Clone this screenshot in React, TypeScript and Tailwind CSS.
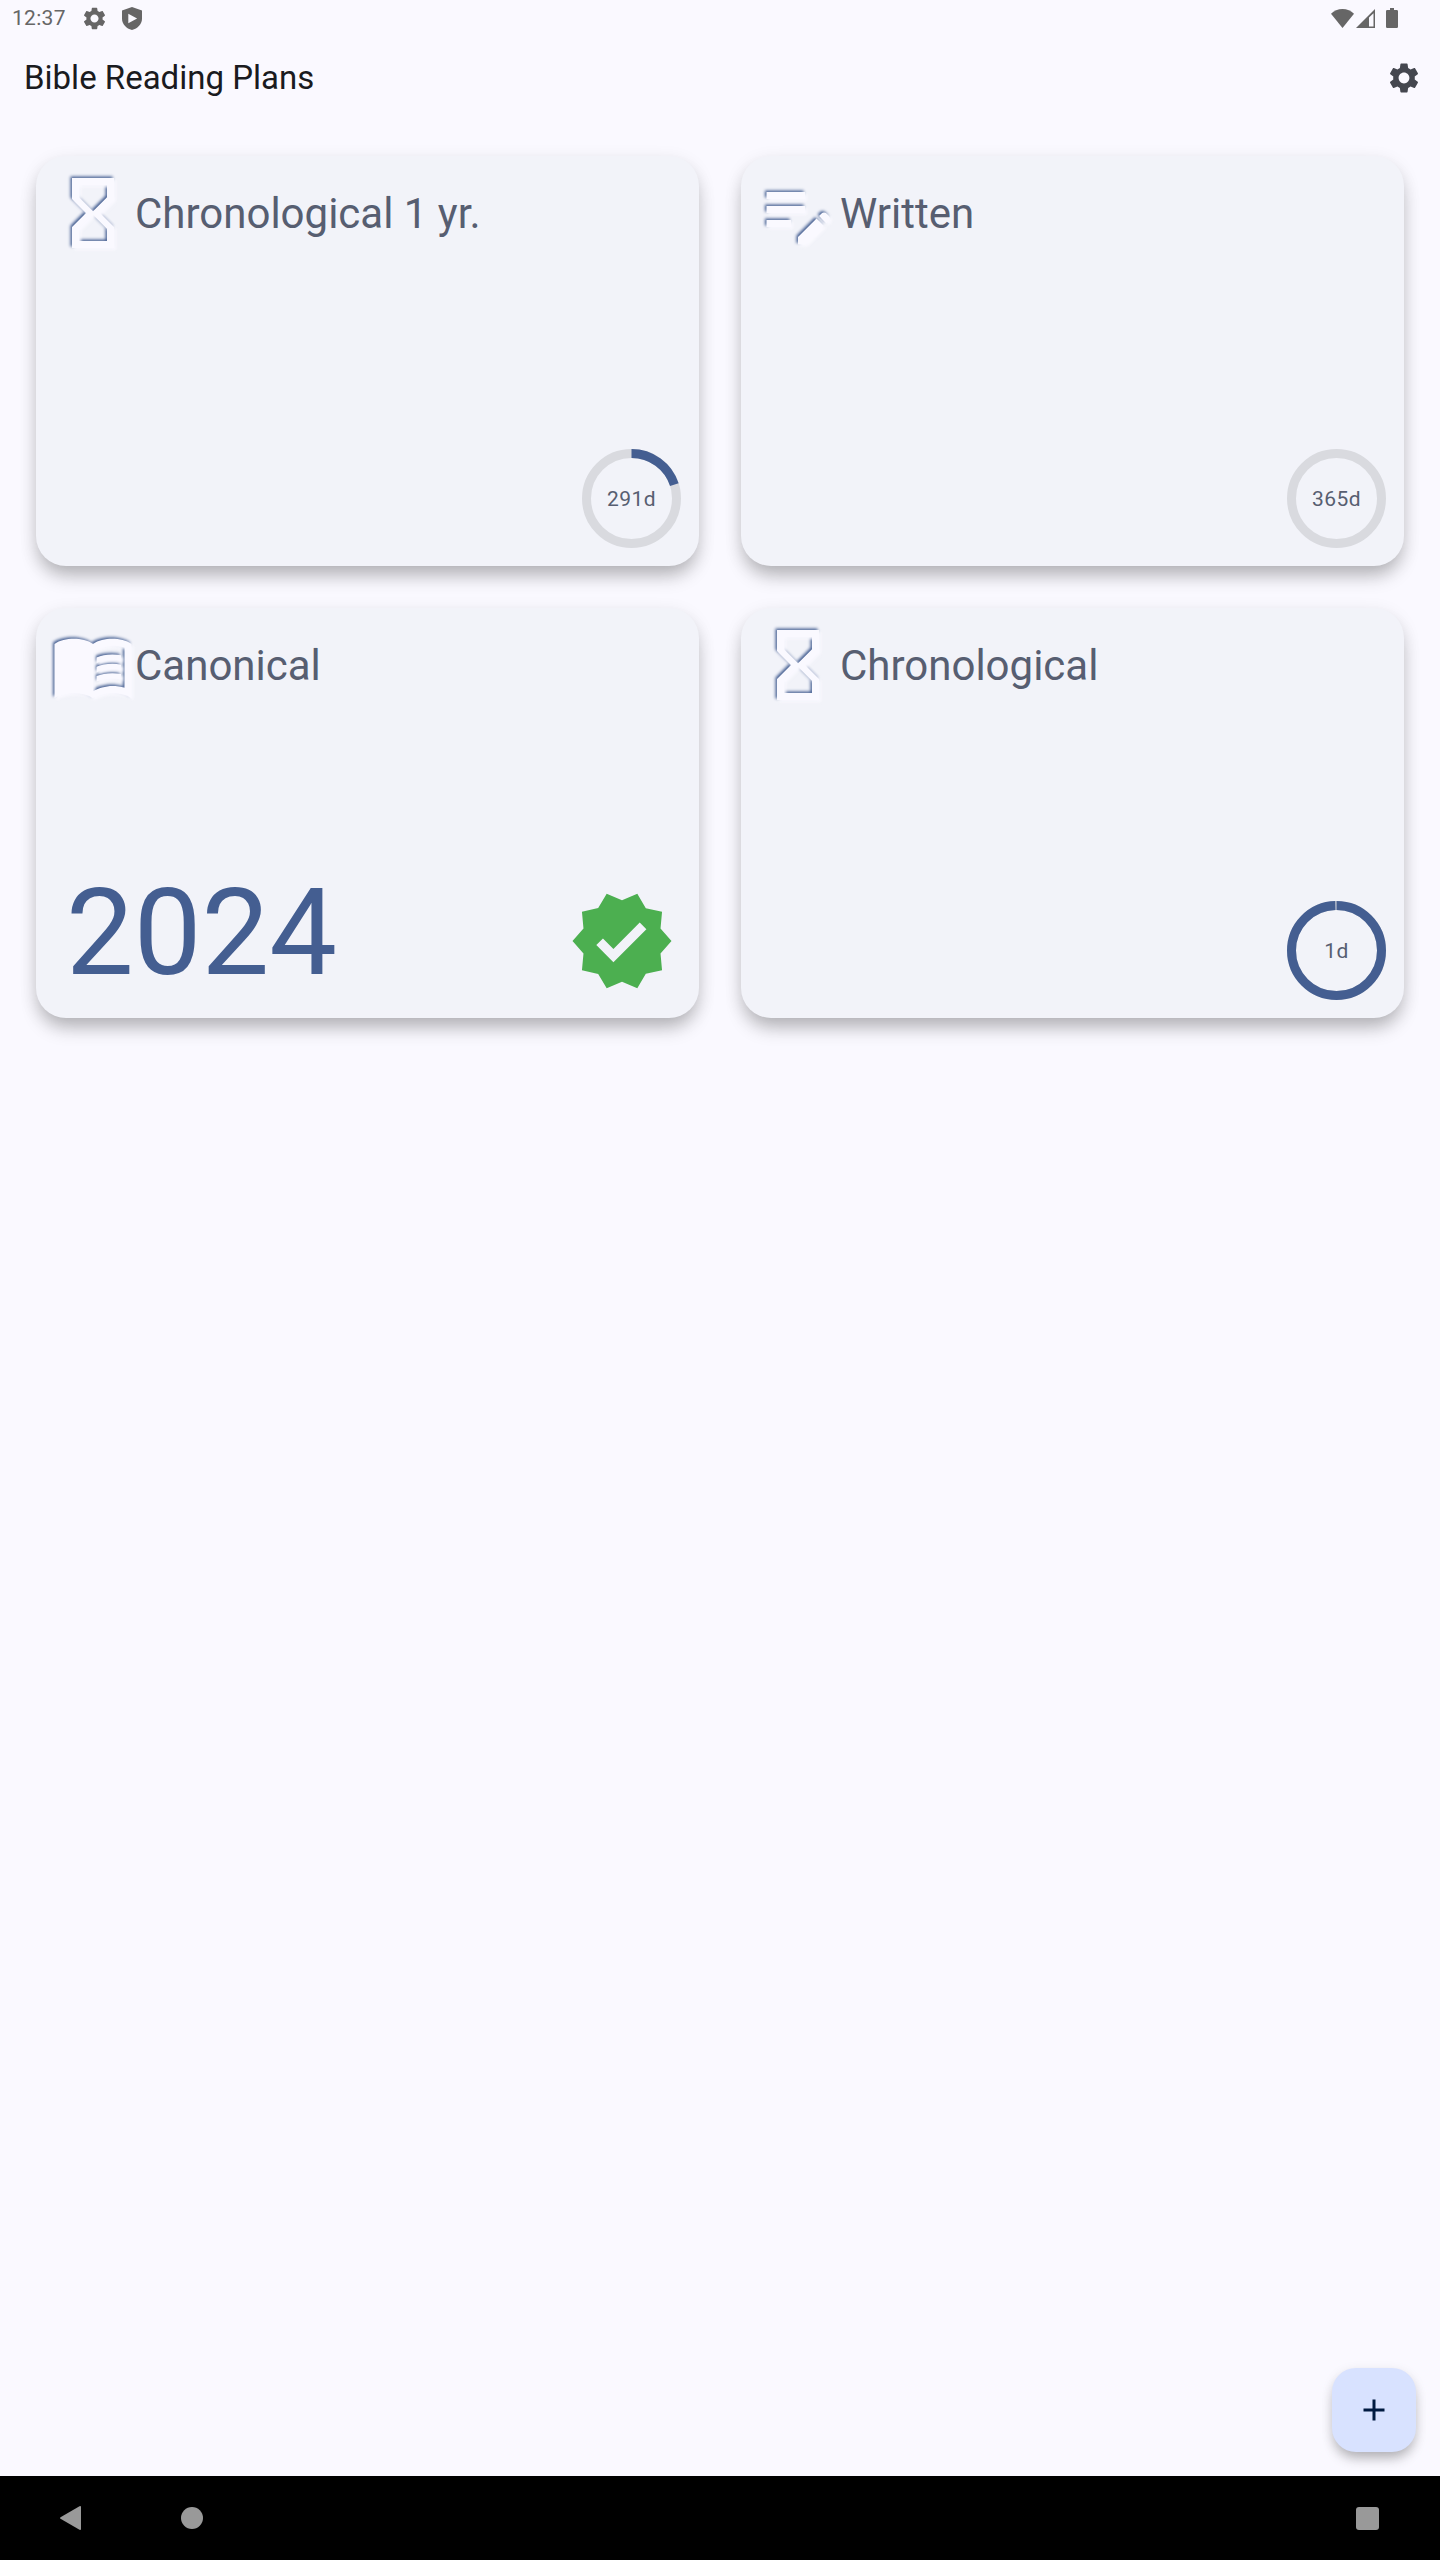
import type { ReactNode } from "react";

const GEAR =
  "M19.14 12.94c.04-.3.06-.61.06-.94 0-.32-.02-.64-.07-.94l2.03-1.58c.18-.14.23-.41.12-.61l-1.92-3.32c-.12-.22-.37-.29-.59-.22l-2.39.96c-.5-.38-1.03-.7-1.62-.94l-.36-2.54c-.04-.24-.24-.41-.48-.41h-3.84c-.24 0-.43.17-.47.41l-.36 2.54c-.59.24-1.13.57-1.62.94l-2.39-.96c-.22-.08-.47 0-.59.22L2.74 8.87c-.12.21-.08.47.12.61l2.03 1.58c-.05.3-.09.63-.09.94s.02.64.07.94l-2.03 1.58c-.18.14-.23.41-.12.61l1.92 3.32c.12.22.37.29.59.22l2.39-.96c.5.38 1.03.7 1.62.94l.36 2.54c.05.24.24.41.48.41h3.84c.24 0 .44-.17.47-.41l.36-2.54c.59-.24 1.13-.56 1.62-.94l2.39.96c.22.08.47 0 .59-.22l1.92-3.32c.12-.22.07-.47-.12-.61l-2.01-1.58zM12 15.6c-1.98 0-3.6-1.62-3.6-3.6s1.62-3.6 3.6-3.6 3.6 1.62 3.6 3.6-1.62 3.6-3.6 3.6z";

const HOURGLASS =
  "M6 2v6h.01L6 8.01 10 12l-4 4 .01.01H6V22h12v-5.99h-.01L18 16l-4-4 4-3.99-.01-.01H18V2H6zm10 14.5V20H8v-3.5l4-4 4 4zm-4-5l-4-4V4h8v3.5l-4 4z";
const NOTE =
  "M3 10h11v2H3v-2zm0-2h11V6H3v2zm0 8h7v-2H3v2zm15.01-3.13.71-.71c.39-.39 1.02-.39 1.41 0l.71.71c.39.39.39 1.02 0 1.41l-.71.71-2.12-2.12zm-.71.71-5.3 5.3V21h2.12l5.3-5.3-2.12-2.12z";
const BOOK =
  "M17.5 4.5c-1.95 0-4.05.4-5.5 1.5-1.45-1.1-3.55-1.5-5.5-1.5S2.45 4.9 1 6v15.5C2.45 20.4 4.55 20 6.5 20s4.05.4 5.5 1.5c1.45-1.1 3.55-1.5 5.5-1.5s4.05.4 5.5 1.5V6c-1.45-1.1-3.55-1.5-5.5-1.5zm3.5 14c-1.1-.35-2.3-.5-3.5-.5-1.7 0-4.15.65-5.5 1.5V8c1.35-.85 3.8-1.5 5.5-1.5 1.2 0 2.4.15 3.5.5v11.5zM17.5 10.5c.88 0 1.73.09 2.5.26V9.24c-.79-.15-1.64-.24-2.5-.24-1.7 0-3.24.29-4.5.83v1.66c1.13-.64 2.7-.99 4.5-.99zM13 12.49v1.66c1.13-.64 2.7-.99 4.5-.99.88 0 1.73.09 2.5.26V11.9c-.79-.15-1.64-.24-2.5-.24-1.7 0-3.24.3-4.5.83zM17.5 14.33c-1.7 0-3.24.29-4.5.83v1.66c1.13-.64 2.7-.99 4.5-.99.88 0 1.73.09 2.5.26v-1.52c-.79-.16-1.64-.24-2.5-.24z";
const VERIFIED =
  "M23 12l-2.44-2.79.34-3.69-3.61-.82-1.89-3.2L12 2.96 8.6 1.5 6.71 4.69 3.1 5.5l.34 3.7L1 12l2.44 2.79-.34 3.7 3.61.82L8.6 22.5l3.4-1.47 3.4 1.46 1.89-3.19 3.61-.82-.34-3.69L23 12zm-12.91 4.72l-3.8-3.81 1.48-1.48 2.32 2.33 5.85-5.87 1.48 1.48-7.33 7.35z";

/** Glyph raised from the card: blue edge above and left, light edge below and right. */
function EmbossedIcon({ path }: { path: string }) {
  return (
    <svg viewBox="0 0 84 84" className="size-[84px] shrink-0 overflow-visible">
      <g className="blur-[1.5px]" fill="#445e91">
        <path transform="translate(-1.5 -1.5) scale(3.5)" d={path} />
      </g>
      <g className="blur-[1.5px]" fill="#faf9ff">
        <path transform="translate(2 2) scale(3.5)" d={path} />
      </g>
      <path fill="#faf9ff" transform="scale(3.5)" d={path} />
    </svg>
  );
}

function DaysRing({ left }: { left: number }) {
  const circumference = 2 * Math.PI * 45;
  const done = (365 - left) / 365;
  return (
    <div className="relative grid size-[99px] place-items-center">
      <svg viewBox="0 0 99 99" className="absolute inset-0 size-full -rotate-90" fill="none" strokeWidth="9">
        <circle cx="49.5" cy="49.5" r="45" stroke="#d9dadf" />
        {done > 0 && (
          <circle
            cx="49.5"
            cy="49.5"
            r="45"
            stroke="#445e91"
            strokeDasharray={`${done * circumference - 0.8} ${circumference}`}
          />
        )}
      </svg>
      <span className="relative text-[21px] leading-[30px] tracking-[0.375px] text-[#575e71]">{left}d</span>
    </div>
  );
}

function PlanCard({ icon, title, children }: { icon: string; title: string; children: ReactNode }) {
  return (
    <article className="flex h-[410px] flex-col justify-between rounded-[30px] bg-[#f2f3f9] shadow-[0_13px_19px_-4px_rgba(0,0,0,0.24),0_5px_18px_0px_rgba(0,0,0,0.1)]">
      <header className="flex items-center pt-[15px] pl-[15px]">
        <EmbossedIcon path={icon} />
        <h2 className="pt-0.5 text-[42px] leading-[54px] text-[#575e71]">{title}</h2>
      </header>
      {children}
    </article>
  );
}

function RingFooter({ left }: { left: number }) {
  return (
    <footer className="flex justify-end p-[18px]">
      <DaysRing left={left} />
    </footer>
  );
}

export default function App() {
  return (
    <div className="flex h-[2560px] w-[1440px] flex-col bg-[#faf9ff] font-[Roboto,sans-serif]">
      <div className="flex h-9 items-center pr-[42px] pl-3 text-[#666666]">
        <span className="w-[54px] text-[21px] leading-9 tracking-[0.3px]">12:37</span>
        <svg viewBox="0 0 24 24" className="ml-[15px] size-[27px]" fill="currentColor">
          <path d={GEAR} />
        </svg>
        <svg viewBox="0 0 20 23" className="ml-[14px] h-[23px] w-5" fill="currentColor">
          <path fillRule="evenodd" d="M10 0 0 3.6v8.2C0 17 4.3 21.700 10 23c5.700-1.300 10-6 10-11.200V3.600zM6.300 6.800v9.400l8.800-4.700z" />
        </svg>
        <svg viewBox="0 0 23 19" className="ml-auto h-[19px] w-[23px]" fill="currentColor">
          <path d="M11.500 19 0 4.800C3 1.800 7 0 11.500 0S20 1.800 23 4.800z" />
        </svg>
        <svg viewBox="0 0 19 19" className="ml-0.5 size-[19px]" fill="currentColor">
          <path fillRule="evenodd" d="M19 0v19H0zM13 8.500V17.500h4.500V4.200z" />
        </svg>
        <svg viewBox="0 0 12 20" className="ml-[11px] h-5 w-3" fill="currentColor">
          <path d="M4 0h4v2h2.700Q12 2 12 3.300v15.400Q12 20 10.700 20H1.300Q0 20 0 18.700V3.300Q0 2 1.300 2H4z" />
        </svg>
      </div>

      <div className="flex h-[84px] items-center justify-between pr-[18px] pl-6">
        <h1 className="text-[33px] leading-[42px] text-[#1a1b20]">Bible Reading Plans</h1>
        <button aria-label="Settings" className="text-[#44474f]">
          <svg viewBox="0 0 24 24" className="size-9" fill="currentColor">
            <path d={GEAR} />
          </svg>
        </button>
      </div>

      <main className="grid grid-cols-2 gap-[42px] px-9 pt-9">
        <PlanCard icon={HOURGLASS} title="Chronological 1 yr.">
          <RingFooter left={291} />
        </PlanCard>
        <PlanCard icon={NOTE} title="Written">
          <RingFooter left={365} />
        </PlanCard>
        <PlanCard icon={BOOK} title="Canonical">
          <footer className="flex items-end justify-between pr-[23px] pb-[23px] pl-[30px]">
            <span className="-mb-px text-[120.6px] leading-[126px] text-[#445e91]">2024</span>
            <svg viewBox="0 0 24 24" className="size-[108px]" fill="#4caf50">
              <path d={VERIFIED} />
            </svg>
          </footer>
        </PlanCard>
        <PlanCard icon={HOURGLASS} title="Chronological">
          <RingFooter left={1} />
        </PlanCard>
      </main>

      <div className="mt-auto flex justify-end pr-6 pb-6">
        <button
          aria-label="Add plan"
          className="grid size-[84px] place-items-center rounded-3xl bg-[#d8e2ff] text-[#001a41] shadow-[0_9px_13px_-3px_rgba(0,0,0,0.24),0_3px_12px_0px_rgba(0,0,0,0.1)]"
        >
          <svg viewBox="0 0 24 24" className="size-9" fill="currentColor">
            <path d="M19 13h-6v6h-2v-6H5v-2h6V5h2v6h6v2z" />
          </svg>
        </button>
      </div>

      <nav className="flex h-[84px] items-center bg-black pr-[61px] pl-[60px] text-[#999999]">
        <svg viewBox="0 0 21 24" className="h-6 w-[21px]" fill="currentColor">
          <path d="M19.500.2Q21-.3 21 1v22q0 1.300-1.500.8L.5 12.800q-.9-.8 0-1.600z" />
        </svg>
        <span className="ml-[100px] size-[22px] rounded-full bg-[#999999]" />
        <span className="ml-auto size-[23px] rounded-[3px] bg-[#999999]" />
      </nav>
    </div>
  );
}
